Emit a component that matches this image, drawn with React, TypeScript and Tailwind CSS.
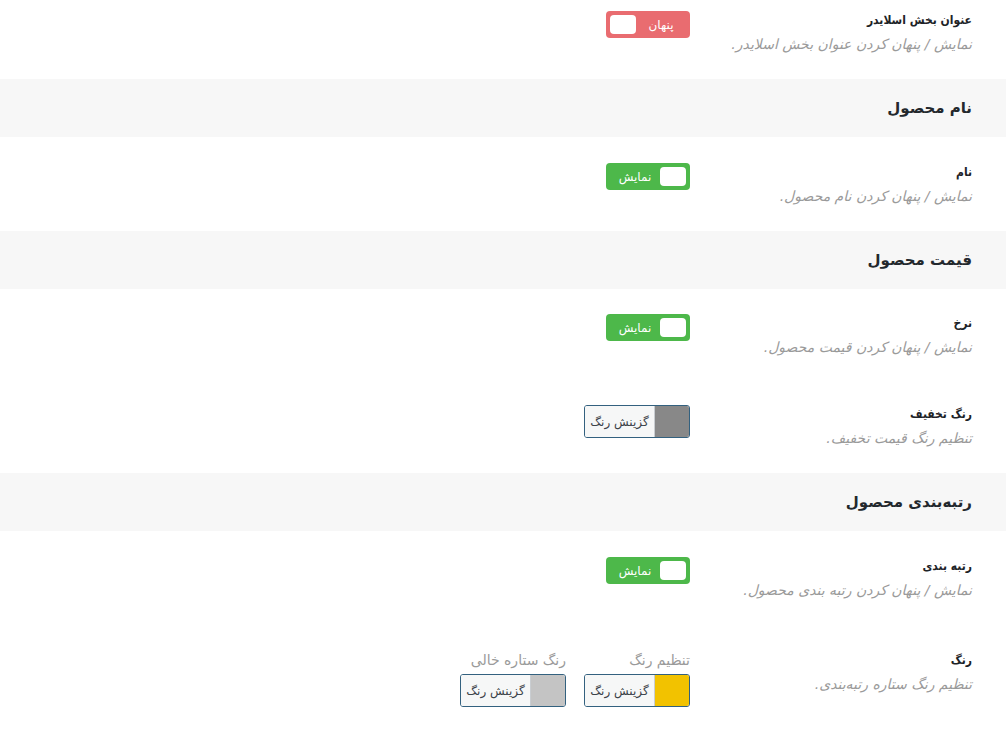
import React from "react";

// Settings panel (RTL) — toggles and colour pickers grouped under section headers.

const Toggle: React.FC<{ on: boolean }> = ({ on }) => (
  <div
    className={`flex h-[27px] w-[84px] items-center rounded-[4px] px-[4px] ${
      on ? "bg-[#4db84a]" : "bg-[#e96c70]"
    }`}
  >
    {on ? (
      <>
        <span className="h-[19px] w-[26px] rounded-[4px] bg-white" />
        <span className="flex-1 text-center text-[12px] text-white">نمایش</span>
      </>
    ) : (
      <>
        <span className="flex-1 text-center text-[12px] text-white">پنهان</span>
        <span className="h-[19px] w-[26px] rounded-[4px] bg-white" />
      </>
    )}
  </div>
);

const ColorButton: React.FC<{ color: string }> = ({ color }) => (
  <div className="flex h-[33px] w-[106px] overflow-hidden rounded-[3px] border border-[#33617f]">
    <span className="w-[34px] shrink-0" style={{ background: color }} />
    <span className="flex flex-1 items-center justify-center border-r border-[#c9cdd1] bg-[#f6f7f7] text-[12px] text-[#3c434a]">
      گزینش رنگ
    </span>
  </div>
);

const Row: React.FC<{
  label: string;
  desc: string;
  children: React.ReactNode;
  className?: string;
}> = ({ label, desc, children, className = "pt-[26px] pb-[25px]" }) => (
  <div className={`flex gap-5 pr-[34px] ${className}`}>
    <div className="w-[262px] shrink-0">
      <div className="font-['DejaVu_Sans_Condensed','DejaVu_Sans',sans-serif] text-[12px] font-bold leading-[18px] text-[#1d2327]">
        {label}
      </div>
      <div className="mt-[5px] text-[14px] italic leading-5 text-[#9a9a9a]">{desc}</div>
    </div>
    <div className="flex-1">{children}</div>
  </div>
);

const Header: React.FC<{ title: string }> = ({ title }) => (
  <div className="flex h-[58px] items-center bg-[#f7f7f7] pr-[34px] text-[15px] font-bold text-[#23282d]">
    {title}
  </div>
);

export default function App() {
  return (
    <div
      dir="rtl"
      className="min-h-[737px] overflow-hidden bg-white font-['DejaVu_Sans',sans-serif]"
    >
      <Row
        label="عنوان بخش اسلایدر"
        desc="نمایش / پنهان کردن عنوان بخش اسلایدر."
        className="pt-[11px] pb-[25px]"
      >
        <Toggle on={false} />
      </Row>

      <Header title="نام محصول" />
      <Row label="نام" desc="نمایش / پنهان کردن نام محصول.">
        <Toggle on />
      </Row>

      <Header title="قیمت محصول" />
      <Row
        label="نرخ"
        desc="نمایش / پنهان کردن قیمت محصول."
        className="pt-[25px] pb-[22px]"
      >
        <Toggle on />
      </Row>
      <Row label="رنگ تخفیف" desc="تنظیم رنگ قیمت تخفیف.">
        <ColorButton color="#888888" />
      </Row>

      <Header title="رتبه‌بندی محصول" />
      <Row label="رتبه بندی" desc="نمایش / پنهان کردن رتبه بندی محصول.">
        <Toggle on />
      </Row>
      <Row label="رنگ" desc="تنظیم رنگ ستاره رتبه‌بندی.">
        <div className="flex gap-[18px]">
          <div>
            <div className="mb-[5px] text-[14px] leading-[18px] text-[#9a9a9a]">تنظیم رنگ</div>
            <ColorButton color="#f2c200" />
          </div>
          <div>
            <div className="mb-[5px] text-[14px] leading-[18px] text-[#9a9a9a]">رنگ ستاره خالی</div>
            <ColorButton color="#c4c4c4" />
          </div>
        </div>
      </Row>
    </div>
  );
}
